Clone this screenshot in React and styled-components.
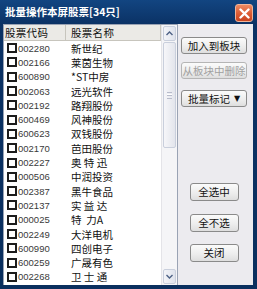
import styled, { createGlobalStyle } from 'styled-components';

const stocks = [
  ['002280', '新世纪'],
  ['002166', '莱茵生物'],
  ['600890', '*ST中房'],
  ['002063', '远光软件'],
  ['002192', '路翔股份'],
  ['600469', '风神股份'],
  ['600623', '双钱股份'],
  ['002170', '芭田股份'],
  ['002227', '奥 特 迅'],
  ['000506', '中润投资'],
  ['002387', '黑牛食品'],
  ['002137', '实 益 达'],
  ['000025', '特  力A'],
  ['002249', '大洋电机'],
  ['600990', '四创电子'],
  ['600259', '广晟有色'],
  ['002268', '卫 士 通'],
];

const App = () => {
  return (
    <>
      <GlobalStyle />
      <Window>
        <TitleBar>
          <Title>批量操作本屏股票[34只]</Title>
          <CloseButton>
            <svg width="11" height="11" viewBox="0 0 11 11">
              <path d="M1.5 1.5 L9.5 9.5 M9.5 1.5 L1.5 9.5" stroke="#fff" strokeWidth="2.4" strokeLinecap="round" />
            </svg>
          </CloseButton>
        </TitleBar>
        <Body>
          <ListBox>
            <Table>
              <HeaderRow>
                <HeaderCell $width={62}>股票代码</HeaderCell>
                <HeaderCell $grow>股票名称</HeaderCell>
              </HeaderRow>
              {stocks.map(([code, name]) => (
                <Row key={code}>
                  <Check />
                  <Code>{code}</Code>
                  <Name>{name}</Name>
                </Row>
              ))}
            </Table>
            <ScrollBar>
              <ArrowButton>
                <svg width="7" height="5" viewBox="0 0 7 5">
                  <path d="M0.5 4 L3.5 1 L6.5 4" fill="none" stroke="#4d6185" strokeWidth="1.4" />
                </svg>
              </ArrowButton>
              <Track>
                <Thumb>
                  <Grip />
                </Thumb>
              </Track>
              <ArrowButton>
                <svg width="7" height="5" viewBox="0 0 7 5">
                  <path d="M0.5 1 L3.5 4 L6.5 1" fill="none" stroke="#4d6185" strokeWidth="1.4" />
                </svg>
              </ArrowButton>
            </ScrollBar>
          </ListBox>
          <Side>
            <Button $wide $top={13}>加入到板块</Button>
            <Button $wide $top={8} $disabled>从板块中删除</Button>
            <Button $wide $top={11}>
              批量标记
              <Arrow>▼</Arrow>
            </Button>
            <Button $top={76}>全选中</Button>
            <Button $top={13}>全不选</Button>
            <Button $top={12}>关闭</Button>
          </Side>
        </Body>
      </Window>
    </>
  );
};

export default App;

const GlobalStyle = createGlobalStyle`
  body {
    margin: 0;
    font-family: "Noto Sans CJK SC", "Liberation Sans", sans-serif;
  }
`;

const Window = styled.div`
  width: 257px;
  height: 289px;
  box-sizing: border-box;
  background: linear-gradient(#124581, #0b3265 24px, #0a2f5e);
  padding: 0 4px 4px 3px;
  display: flex;
  flex-direction: column;
`;

const TitleBar = styled.div`
  height: 24px;
  flex-shrink: 0;
  display: flex;
  align-items: center;
  justify-content: space-between;
  padding: 0 0 0 2px;
`;

const Title = styled.span`
  color: #fff;
  font-size: 10.5px;
  line-height: 14px;
  font-weight: bold;
`;

const CloseButton = styled.div`
  width: 18px;
  height: 18px;
  margin-top: 2px;
  box-sizing: border-box;
  border: 1px solid #f0b49a;
  border-radius: 3px;
  background: linear-gradient(#ec8a62, #db5a33 55%, #c9441f);
  display: flex;
  align-items: center;
  justify-content: center;
`;

const Body = styled.div`
  flex: 1;
  display: flex;
  background: #ecebef;
  min-height: 0;
`;

const ListBox = styled.div`
  width: 175px;
  display: flex;
  background: #fff;
  border: 1px solid #9aa3b4;
  border-bottom: none;
  box-sizing: border-box;
  overflow: hidden;
`;

const Table = styled.div`
  flex: 1;
  display: flex;
  flex-direction: column;
  overflow: hidden;
`;

const HeaderRow = styled.div`
  height: 15px;
  flex-shrink: 0;
  display: flex;
  background: #ebeae6;
  border-bottom: 1px solid #c7c5bd;
`;

const HeaderCell = styled.div`
  width: ${(p) => (p.$width ? `${p.$width}px` : 'auto')};
  flex: ${(p) => (p.$grow ? 1 : 'none')};
  box-sizing: border-box;
  padding-left: ${(p) => (p.$grow ? '5px' : '1px')};
  font-size: 10.5px;
  letter-spacing: 0.3px;
  line-height: 15px;
  color: #111;
  border-right: 1px solid #c7c5bd;
`;

const Row = styled.div`
  height: 14.3px;
  flex-shrink: 0;
  display: flex;
  align-items: center;
  padding-left: 3px;
  overflow: hidden;
`;

const Check = styled.span`
  width: 10px;
  height: 10px;
  box-sizing: border-box;
  border: 2px solid #1c1c1c;
  background: #fff;
  flex-shrink: 0;
`;

const Code = styled.span`
  width: 53px;
  margin-left: 1px;
  font-family: "Liberation Sans", sans-serif;
  font-size: 9.5px;
  line-height: 13px;
  color: #3a3a3a;
`;

const Name = styled.span`
  font-size: 10.5px;
  line-height: 13px;
  color: #111;
  white-space: pre;
`;

const ScrollBar = styled.div`
  width: 15px;
  flex-shrink: 0;
  display: flex;
  flex-direction: column;
  background: #f5f5f7;
  border-left: 1px solid #e4e4e8;
`;

const ArrowButton = styled.div`
  height: 15px;
  margin: 1px 1px;
  box-sizing: border-box;
  border: 1px solid #c9cfdc;
  border-radius: 2px;
  background: linear-gradient(90deg, #f3f4f8, #dfe3ec);
  display: flex;
  align-items: center;
  justify-content: center;
  flex-shrink: 0;
`;

const Track = styled.div`
  flex: 1;
  padding: 0 1px;
`;

const Thumb = styled.div`
  height: 106px;
  box-sizing: border-box;
  border: 1px solid #c9cfdc;
  border-radius: 2px;
  background: linear-gradient(90deg, #f6f6f9, #e3e5ec);
  display: flex;
  align-items: center;
  justify-content: center;
`;

const Grip = styled.span`
  width: 5px;
  height: 5px;
  border-top: 1px solid #b8bccb;
  border-bottom: 1px solid #b8bccb;
  background: linear-gradient(#fff 1px, #b8bccb 1px, #b8bccb 2px, transparent 2px);
  background-position: 0 1px;
  background-repeat: no-repeat;
`;

const Side = styled.div`
  flex: 1;
  display: flex;
  flex-direction: column;
  align-items: center;
  padding-right: 3px;
`;

const Button = styled.div`
  width: ${(p) => (p.$wide ? '66px' : '49px')};
  height: ${(p) => (p.$wide ? '17px' : '18px')};
  margin-top: ${(p) => p.$top}px;
  box-sizing: border-box;
  border: 1px solid ${(p) => (p.$disabled ? '#b5b5b5' : '#8a8a8a')};
  border-radius: 3px;
  background: linear-gradient(#fbfbfb, #ececec 60%, #dedede);
  display: flex;
  align-items: center;
  justify-content: center;
  font-size: 10.5px;
  line-height: 14px;
  white-space: nowrap;
  color: ${(p) => (p.$disabled ? '#a0a0a0' : '#111')};
  overflow: hidden;
`;

const Arrow = styled.span`
  margin-left: 4px;
  font-family: "DejaVu Sans", sans-serif;
  font-size: 8px;
`;
